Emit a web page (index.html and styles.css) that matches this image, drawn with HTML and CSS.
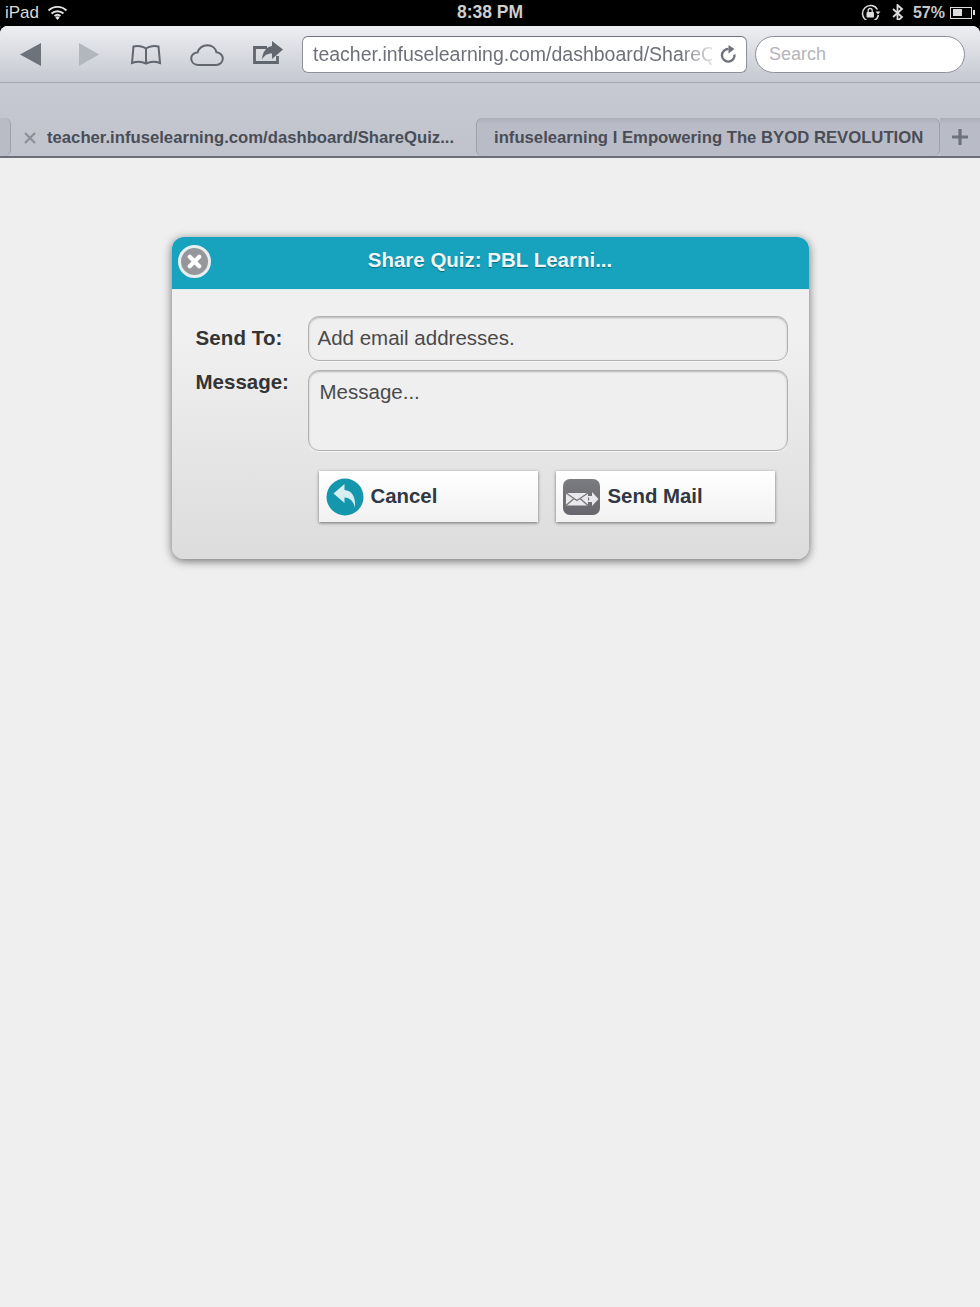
FILE: index.html
```html
<!DOCTYPE html>
<html>
<head>
  <title>Share Quiz</title>
  <link rel="stylesheet" href="styles.css">
</head>
<body>
  <div class="status-bar">
    <div class="status-left">
      <span>iPad</span>
      <svg class="wifi" width="21" height="15" viewBox="0 0 21 15">
        <path d="M1.5 5.5a13 13 0 0 1 18 0M4.5 8.5a9 9 0 0 1 12 0M7.5 11a4.6 4.6 0 0 1 6 0" fill="none" stroke="#e4e4e4" stroke-width="1.9"/>
        <path d="M10.5 15l-2.2-2.6a3 3 0 0 1 4.4 0z" fill="#e4e4e4"/>
      </svg>
    </div>
    <div class="status-time">8:38 PM</div>
    <div class="status-right">
      <svg width="22" height="18" viewBox="0 0 22 18">
        <path d="M16.5 5.5A8 8 0 1 0 17.4 11" fill="none" stroke="#ddd" stroke-width="1.5"/>
        <path d="M14.5 7.5h5l-2.5 3z" fill="#ddd"/>
        <rect x="5.5" y="8" width="7.5" height="5.5" rx="1" fill="#ddd"/>
        <path d="M7.2 8V6.5a2 2 0 0 1 4 0V8" fill="none" stroke="#ddd" stroke-width="1.3"/>
      </svg>
      <svg class="bt" width="12" height="18" viewBox="0 0 12 18">
        <path d="M1 5l9 8-4.5 4V1L10 5l-9 8" fill="none" stroke="#ddd" stroke-width="1.8"/>
      </svg>
      <span class="battery-pct">57%</span>
      <div class="battery"><div class="battery-fill"></div></div>
    </div>
  </div>

  <div class="browser">
    <div class="toolbar">
      <div class="tool-icons">
        <svg width="21" height="23" viewBox="0 0 21 23"><path d="M0 11.5L21 0v23z" fill="#6e727b"/></svg>
        <svg class="forward" width="20" height="23" viewBox="0 0 20 23"><path d="M20 11.5L0 0v23z" fill="#b2b6bf"/></svg>
        <svg class="book" width="32" height="22" viewBox="0 0 32 22">
          <path d="M16 4.5C13 2 7 1.5 3.5 2.500L2 19c4-1.500 10-1.500 14 .5 4-2 10-2 14-.5L28.500 2.500C25 1.500 19 2 16 4.500zM16 4.500V19.500" fill="none" stroke="#62666f" stroke-width="2"/>
        </svg>
        <svg class="cloud" width="34" height="22" viewBox="0 0 34 22">
          <path d="M9 21C4 21 1.200 18 1.200 14.500S4 8.500 7.500 8.500C9 4 13 1.200 17.500 1.200c4.500 0 8 3 9 7 3.500.3 6.300 3 6.300 6.300 0 3.500-2.800 6.500-6.800 6.500z" fill="none" stroke="#62666f" stroke-width="2"/>
        </svg>
        <svg class="share" width="31" height="23" viewBox="0 0 31 23">
          <path d="M14 6.500H1.500v15h23V15" fill="none" stroke="#62666f" stroke-width="2.800"/>
          <path d="M19 0l11 8.500L19 18v-5.500c-4 0-7.500 1.500-10 6C9.500 11 13.500 5.500 19 5z" fill="#62666f"/>
        </svg>
      </div>
      <div class="url-box">
        <span class="url-text">teacher.infuselearning.com/dashboard/ShareQ</span>
        <svg class="reload" width="18" height="20" viewBox="0 0 18 20">
          <path d="M14.500 9.500A6.300 6.300 0 1 1 8.500 4" fill="none" stroke="#6e727b" stroke-width="2.400"/>
          <path d="M8.500 0l6 4-6 4.500z" fill="#6e727b"/>
        </svg>
      </div>
      <div class="search-box">Search</div>
    </div>

    <div class="tab-bar">
      <div class="tab tab-stub"></div>
      <div class="tab tab-active">
        <svg class="tab-close" width="12" height="12" viewBox="0 0 12 12"><path d="M1 1l10 10M11 1l-10 10" stroke="#8c8f98" stroke-width="2.200"/></svg>
        <span>teacher.infuselearning.com/dashboard/ShareQuiz...</span>
      </div>
      <div class="tab tab-other"><span>infuselearning I Empowering The BYOD REVOLUTION</span></div>
      <div class="tab-add">
        <svg width="16" height="16" viewBox="0 0 16 16"><path d="M8 0v16M0 8h16" stroke="#6e727b" stroke-width="3.200"/></svg>
      </div>
    </div>
  </div>

  <div class="page">
    <div class="modal">
      <div class="modal-header">
        <div class="modal-close">
          <svg width="21" height="21" viewBox="0 0 20 20"><path d="M5.500 5.500l9 9M14.500 5.500l-9 9" stroke="#fff" stroke-width="4" stroke-linecap="round"/></svg>
        </div>
        <h1>Share Quiz: PBL Learni...</h1>
      </div>
      <div class="modal-body">
        <div class="form-row">
          <label class="form-label">Send To:</label>
          <div class="field field-input">Add email addresses.</div>
        </div>
        <div class="form-row form-row-message">
          <label class="form-label">Message:</label>
          <div class="field field-textarea">Message...</div>
        </div>
        <div class="buttons">
          <div class="btn">
            <svg width="38" height="38" viewBox="0 0 38 38">
              <circle cx="19" cy="19" r="18.500" fill="#1496ad"/>
              <path d="M7.500 15.500L18.500 6v6c7 .5 11.500 6 10.500 18-1.500-7-5-10-10.500-10.500V25z" fill="#d6edf2"/>
            </svg>
            <span>Cancel</span>
          </div>
          <div class="btn btn-mail">
            <svg width="37" height="36" viewBox="0 0 37 36">
              <defs>
                <linearGradient id="mailBg" x1="0" y1="0" x2="0" y2="1">
                  <stop offset="0" stop-color="#7b7c80"/>
                  <stop offset="1" stop-color="#66666c"/>
                </linearGradient>
              </defs>
              <rect width="37" height="36" rx="7" fill="url(#mailBg)"/>
              <path d="M3 14h22v12.500h-22z" fill="#e9e9eb"/>
              <path d="M3 14l11 7.500 11-7.500M3 26.500l8-7M25 26.500l-8-7" fill="none" stroke="#77787c" stroke-width="1.300"/>
              <path d="M24.500 17h4.500v-4l6.500 7-6.500 7v-4h-4.500l2-3z" fill="#e9e9eb"/>
            </svg>
            <span>Send Mail</span>
          </div>
        </div>
      </div>
    </div>
  </div>
</body>
</html>
```

FILE: styles.css
```css
html, body {
  margin: 0;
  padding: 0;
}

body {
  width: 980px;
  height: 1307px;
  overflow: hidden;
  font-family: "Liberation Sans", Arial, sans-serif;
  background-color: #efeff0;
  color: #333;
}

/* Status bar */
.status-bar {
  height: 26px;
  background-color: #000;
  color: #d8d8d8;
  font-size: 17px;
  display: flex;
  align-items: center;
  justify-content: space-between;
  position: relative;
  padding: 0 8px 1px 5px;
  box-sizing: border-box;
}

.status-left {
  display: flex;
  align-items: center;
  gap: 8px;
}

.status-time {
  position: absolute;
  left: 0;
  right: 0;
  text-align: center;
  font-weight: bold;
  font-size: 17.500px;
  color: #cfcfcf;
}

.status-right {
  display: flex;
  align-items: center;
}

.bt {
  margin-left: 9px;
}

.battery-pct {
  margin-left: 9px;
  font-size: 16px;
  font-weight: bold;
  color: #c8c8c8;
}

.battery {
  width: 22px;
  height: 12px;
  margin-left: 5px;
  border: 1.5px solid #ddd;
  box-sizing: border-box;
  padding: 1.500px;
  position: relative;
}

.battery::after {
  content: "";
  position: absolute;
  right: -4px;
  top: 2px;
  width: 2px;
  height: 5px;
  background-color: #ddd;
}

.battery-fill {
  width: 55%;
  height: 100%;
  background-color: #ddd;
}

/* Browser chrome */
.browser {
  background: linear-gradient(to bottom, #cbced6 0%, #c0c3cc 100%);
  height: 132px;
  border-radius: 8px 8px 0 0;
  position: relative;
}

.status-bar + .browser {
  box-shadow: 0 -6px 0 #000;
}

.toolbar {
  height: 57px;
  box-sizing: border-box;
  background: linear-gradient(to bottom, #eeeff2 0%, #d9dbe1 50%, #c5c8d1 100%);
  border-bottom: 1px solid #a4a7b0;
  border-radius: 8px 8px 0 0;
  display: flex;
  align-items: flex-start;
  padding-top: 10px;
}

.tool-icons {
  width: 302px;
  height: 37px;
  display: flex;
  align-items: center;
  padding-left: 20px;
  box-sizing: border-box;
}

.forward {
  margin-left: 38px;
}

.book {
  margin-left: 31px;
}

.cloud {
  margin-left: 28px;
}

.share {
  margin-left: 29px;
  margin-top: -4px;
}

.url-box {
  width: 445px;
  height: 37px;
  box-sizing: border-box;
  background-color: #fff;
  border: 1px solid #8d9099;
  border-top-color: #70737b;
  border-radius: 6px;
  padding: 0 8px 0 10px;
  display: flex;
  align-items: center;
  font-size: 19.500px;
  color: #6e717a;
}

.url-text {
  flex: 1;
  min-width: 0;
  white-space: nowrap;
  -webkit-mask-image: linear-gradient(to right, #000 92%, rgba(0, 0, 0, 0.2) 100%);
  mask-image: linear-gradient(to right, #000 92%, rgba(0, 0, 0, 0.2) 100%);
}

.reload {
  margin-left: 8px;
  flex-shrink: 0;
}

.search-box {
  width: 210px;
  height: 37px;
  margin-left: 8px;
  box-sizing: border-box;
  background-color: #fff;
  border: 1px solid #8d9099;
  border-radius: 19px;
  padding-left: 13px;
  line-height: 35px;
  font-size: 18px;
  color: #b4b5b9;
}

/* Tabs */
.tab-bar {
  height: 75px;
  box-sizing: border-box;
  padding-top: 35px;
  display: flex;
  border-bottom: 2px solid #6c6f78;
}

.tab {
  box-sizing: border-box;
  display: flex;
  align-items: center;
  padding-top: 2px;
  font-size: 16.700px;
  font-weight: bold;
  color: #4a4d57;
  white-space: nowrap;
  border-radius: 0 0 6px 6px;
}

.tab-stub {
  width: 11px;
  background-color: #b9bcc6;
  border-right: 1px solid #9ea1aa;
  border-radius: 0 6px 6px 0;
}

.tab-active {
  width: 465px;
  padding-left: 13px;
}

.tab-close {
  margin-right: 11px;
}

.tab-other {
  width: 464px;
  background: linear-gradient(to bottom, #acafb9 0, #b9bcc6 6px);
  border-left: 1px solid #9ea1aa;
  border-right: 1px solid #9ea1aa;
  border-radius: 6px;
  padding-left: 17px;
}

.tab-add {
  flex: 1;
  background: linear-gradient(to bottom, #acafb9 0, #b9bcc6 6px);
  display: flex;
  align-items: center;
  justify-content: center;
}

/* Page and dialog */
.page {
  padding-top: 79px;
}

.modal {
  width: 637px;
  height: 322px;
  margin: 0 auto;
  border-radius: 12px;
  overflow: hidden;
  background: linear-gradient(to bottom, #f0f0f1 0%, #f0f0f1 30%, #dcdcdc 100%);
  box-shadow: 0 2px 10px rgba(0, 0, 0, 0.55);
  display: flex;
  flex-direction: column;
}

.modal-header {
  height: 53px;
  box-sizing: border-box;
  flex-shrink: 0;
  padding-bottom: 6px;
  background-color: #17a2bd;
  border-bottom: 1px solid #dff0f5;
  position: relative;
  display: flex;
  align-items: center;
  justify-content: center;
}

.modal-header h1 {
  margin: 0;
  font-size: 20.500px;
  font-weight: bold;
  color: #eef6f8;
  text-shadow: 0 1px 1px rgba(0, 0, 0, 0.35);
}

.modal-close {
  position: absolute;
  left: 6px;
  top: 8px;
  width: 33px;
  height: 33px;
  box-sizing: border-box;
  border: 3px solid #e9eff1;
  border-radius: 50%;
  background-color: #96979b;
  display: flex;
  align-items: center;
  justify-content: center;
}

.modal-body {
  padding: 26px 21px 0 24px;
}

.form-row {
  display: flex;
  align-items: flex-start;
}

.form-row-message {
  margin-top: 9px;
}

.form-label {
  width: 112px;
  flex-shrink: 0;
  font-size: 20.500px;
  font-weight: bold;
  color: #343434;
  line-height: 44px;
  letter-spacing: 0.1px;
}

.form-row-message .form-label {
  line-height: 24px;
  letter-spacing: 0;
}

.field {
  flex: 1;
  box-sizing: border-box;
  border: 1px solid #b2b2b3;
  border-radius: 11px;
  background-color: #efeff0;
  box-shadow: inset 0 1px 2px rgba(0, 0, 0, 0.25), 0 1px 0 rgba(255, 255, 255, 0.5);
  font-size: 20.500px;
  color: #4a4a4a;
}

.field-input {
  height: 45px;
  line-height: 42px;
  padding-left: 9px;
}

.field-textarea {
  height: 81px;
  line-height: 42px;
  padding-left: 11px;
}

.buttons {
  display: flex;
  gap: 18px;
  margin-top: 20px;
  padding-left: 123px;
}

.btn {
  width: 219px;
  height: 51px;
  box-sizing: border-box;
  padding-left: 7px;
  background: linear-gradient(to bottom, #ffffff 0%, #f1f1f2 100%);
  box-shadow: 0 1px 3px rgba(0, 0, 0, 0.5);
  display: flex;
  align-items: center;
  gap: 7px;
  font-size: 20.400px;
  font-weight: bold;
  color: #303843;
}

.btn-mail {
  gap: 8px;
}
```
